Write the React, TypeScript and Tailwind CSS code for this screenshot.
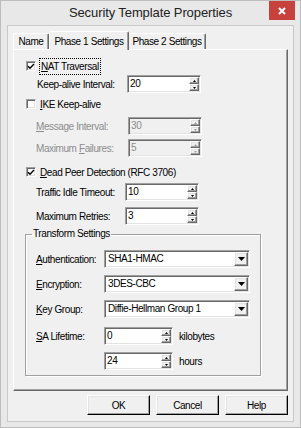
import React from 'react';

const raised =
  'border border-t-white border-l-white border-r-[#696969] border-b-[#696969] shadow-[inset_-1px_-1px_#a0a0a0,inset_1px_1px_#e3e3e3]';
const sunken =
  'border border-t-[#a0a0a0] border-l-[#a0a0a0] border-r-white border-b-white shadow-[inset_1px_1px_#696969,inset_-1px_-1px_#e3e3e3]';

function Tri({ up, dim }: { up?: boolean; dim?: boolean }) {
  return (
    <svg width="3" height="2" viewBox="0 0 3 2">
      <polygon points={up ? '1.5,0 3,2 0,2' : '0,0 3,0 1.5,2'} fill={dim ? '#a0a0a0' : '#000'} />
    </svg>
  );
}

function Spin({ value, w, disabled }: { value: string; w: string; disabled?: boolean }) {
  return (
    <div className={`${sunken} ${w} flex h-[18px] p-px ${disabled ? 'bg-[#f0f0f0] text-[#8a8a8a]' : 'bg-white text-black'}`}>
      <span className="flex-1 pl-[1px] leading-[14px]">{value}</span>
      <div className="flex w-[10px] flex-col">
        <div className={`${raised} flex h-[7px] items-center justify-center bg-[#f0f0f0]`}>
          <Tri up dim={disabled} />
        </div>
        <div className={`${raised} flex h-[7px] items-center justify-center bg-[#f0f0f0]`}>
          <Tri dim={disabled} />
        </div>
      </div>
    </div>
  );
}

function Combo({ value }: { value: string }) {
  return (
    <div className={`${sunken} flex h-[18px] w-[146px] bg-white p-px`}>
      <span className="flex-1 pl-[2px] leading-[14px] text-black">{value}</span>
      <div className={`${raised} flex w-[14px] items-center justify-center bg-[#f0f0f0]`}>
        <svg width="7" height="4" viewBox="0 0 7 4">
          <polygon points="0,0 7,0 3.5,4" fill="#000" />
        </svg>
      </div>
    </div>
  );
}

function Check({ children, focus }: { children: React.ReactNode; focus?: boolean }) {
  return (
    <div className="flex h-[12px] items-center gap-[4px] pl-[12px]">
      <div className={`${sunken} flex h-[10px] w-[10px] items-center justify-center bg-white`}>
        <svg width="8" height="7" viewBox="0 0 8 7">
          <path d="M1 3.2 L3 5.3 L7 1" stroke="#000" strokeWidth="1.4" fill="none" />
        </svg>
      </div>
      <span className={focus ? 'px-px outline-1 outline-dotted outline-black' : ''}>{children}</span>
    </div>
  );
}

function Box({ children }: { children: React.ReactNode }) {
  return (
    <div className="flex h-[12px] items-center gap-[4px] pl-[12px]">
      <div className={`${sunken} h-[10px] w-[10px] bg-white`} />
      <span>{children}</span>
    </div>
  );
}

function Row({ label, pl, lw, mt, dim, children }: { label: React.ReactNode; pl: string; lw: string; mt: string; dim?: boolean; children: React.ReactNode }) {
  return (
    <div className={`flex h-[18px] items-center ${pl} ${mt}`}>
      <span className={`${lw} ${dim ? 'text-[#8d8d8d]' : 'text-black'}`}>{label}</span>
      {children}
    </div>
  );
}

function Btn({ children }: { children: React.ReactNode }) {
  return (
    <div className="flex h-[20px] w-[63px] items-center justify-center border border-t-white border-l-white border-r-black border-b-black bg-[#f0f0f0] shadow-[inset_-1px_-1px_#a0a0a0,inset_1px_1px_#e3e3e3]">
      {children}
    </div>
  );
}

export default function App() {
  return (
    <div className="flex h-[428px] w-[301px] flex-col border border-[#bdbdbd] bg-[#e8e8e8] text-[10px] tracking-[-0.4px] text-black font-['Liberation_Sans',Arial,sans-serif]">
      <div className="flex h-[24px] items-start">
        <div className="w-[31px]" />
        <div className="flex h-[24px] flex-1 items-center justify-center text-[13px] tracking-[-0.1px] text-[#222]">
          Security Template Properties
        </div>
        <div className="mr-[5px] flex h-[19px] w-[26px] items-center justify-center bg-[#c7413d]">
          <svg width="8" height="8" viewBox="0 0 8 8">
            <path d="M1 1 L7 7 M7 1 L1 7" stroke="#fff" strokeWidth="2" />
          </svg>
        </div>
      </div>

      <div className="mx-[6px] flex h-[397px] flex-col border border-[#c9c9c9] bg-[#f0f0f0] px-[5px] pt-[5px]">
        <div className="flex h-[18px] items-end">
          <div className="flex h-[16px] w-[36px] items-center justify-center rounded-t-[2px] border-t border-l border-r border-t-white border-l-white border-r-[#696969] shadow-[inset_-1px_0_#a0a0a0]">
            Name
          </div>
          <div className="relative z-10 -mb-px flex h-[19px] w-[80px] items-start justify-center rounded-t-[2px] border-t border-l border-r border-t-white border-l-white border-r-[#696969] bg-[#f0f0f0] pt-[2px] shadow-[inset_-1px_0_#a0a0a0]">
            Phase 1 Settings
          </div>
          <div className="flex h-[16px] w-[77px] items-center justify-center rounded-t-[2px] border-t border-r border-t-white border-r-[#696969] shadow-[inset_-1px_0_#a0a0a0]">
            Phase 2 Settings
          </div>
        </div>

        <div className="flex h-[342px] flex-col border border-t-white border-l-white border-r-[#696969] border-b-[#696969] shadow-[inset_-1px_-1px_#a0a0a0]">
          <div className="mt-[10px]">
            <Check focus>
              <u>N</u>AT Traversal
            </Check>
          </div>
          <Row label="Keep-alive Interval:" pl="pl-[23px]" lw="w-[90px]" mt="mt-[3px]">
            <Spin value="20" w="w-[74px]" />
          </Row>
          <div className="mt-[5px]">
            <Box>
              <u>I</u>KE Keep-alive
            </Box>
          </div>
          <Row label={<><u>M</u>essage Interval:</>} pl="pl-[22px]" lw="w-[92px]" mt="mt-[7px]" dim>
            <Spin value="30" w="w-[74px]" disabled />
          </Row>
          <Row label={<>Maximum <u>F</u>ailures:</>} pl="pl-[22px]" lw="w-[92px]" mt="mt-[4px]" dim>
            <Spin value="5" w="w-[74px]" disabled />
          </Row>
          <div className="mt-[9px]">
            <Check>
              <u>D</u>ead Peer Detection (RFC 3706)
            </Check>
          </div>
          <Row label="Traffic Idle Timeout:" pl="pl-[22px]" lw="w-[89px]" mt="mt-[5px]">
            <Spin value="10" w="w-[74px]" />
          </Row>
          <Row label="Maximum Retries:" pl="pl-[22px]" lw="w-[89px]" mt="mt-[6px]">
            <Spin value="3" w="w-[74px]" />
          </Row>

          <fieldset className="ml-[11px] mt-[3px] w-[236px] border border-[#a0a0a0] px-[6px] pb-[5px] shadow-[inset_1px_1px_white,1px_1px_white]">
            <legend className="px-px leading-[12px]">Transform Settings</legend>
            <div className="mt-[10px] flex h-[18px] items-center pl-[4px]">
              <span className="w-[68px]"><u>A</u>uthentication:</span>
              <Combo value="SHA1-HMAC" />
            </div>
            <div className="mt-[7px] flex h-[18px] items-center pl-[4px]">
              <span className="w-[68px]"><u>E</u>ncryption:</span>
              <Combo value="3DES-CBC" />
            </div>
            <div className="mt-[7px] flex h-[18px] items-center pl-[4px]">
              <span className="w-[68px]"><u>K</u>ey Group:</span>
              <Combo value="Diffie-Hellman Group 1" />
            </div>
            <div className="mt-[9px] flex h-[18px] items-center pl-[4px]">
              <span className="w-[68px]"><u>S</u>A Lifetime:</span>
              <Spin value="0" w="w-[69px]" />
              <span className="ml-[6px]">kilobytes</span>
            </div>
            <div className="mt-[7px] flex h-[18px] items-center pl-[72px]">
              <Spin value="24" w="w-[69px]" />
              <span className="ml-[6px]">hours</span>
            </div>
          </fieldset>
        </div>

        <div className="mt-[4px] flex justify-end gap-[6px]">
          <Btn>OK</Btn>
          <Btn>Cancel</Btn>
          <Btn>Help</Btn>
        </div>
      </div>
    </div>
  );
}
